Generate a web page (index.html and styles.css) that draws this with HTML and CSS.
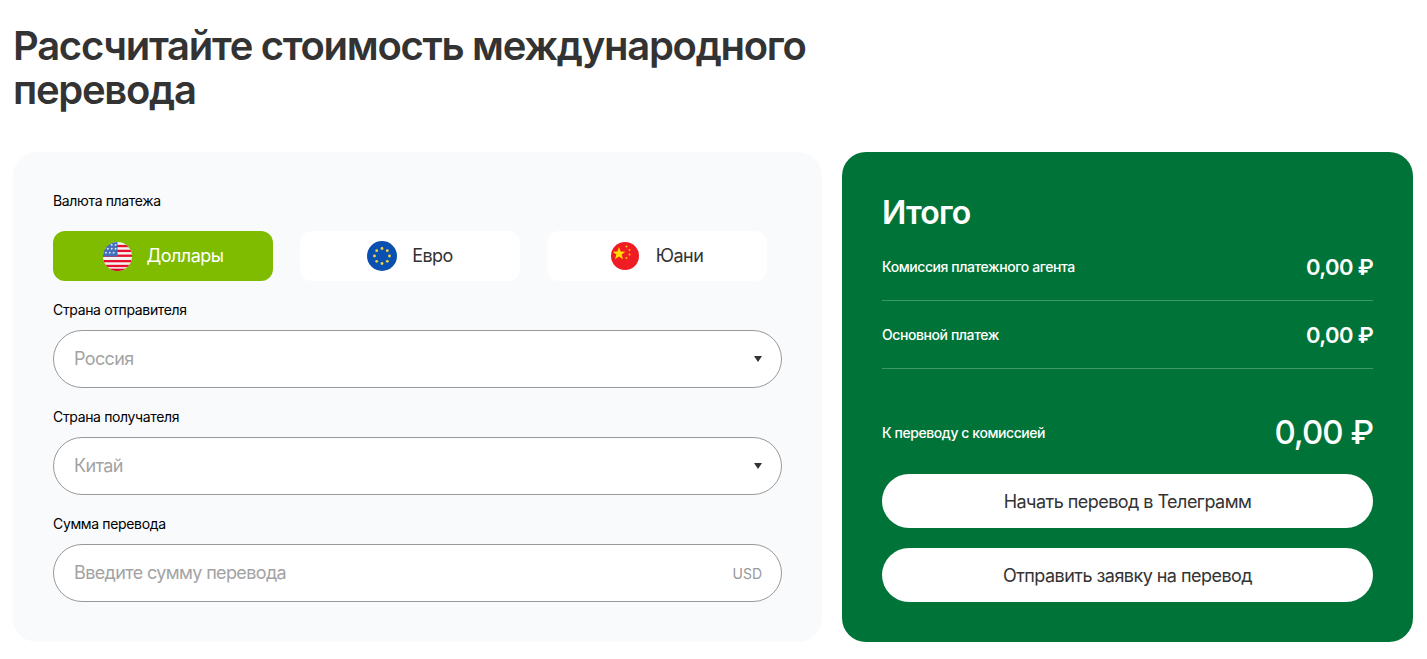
FILE: index.html
```html
<!DOCTYPE html>
<html lang="ru">
<head>
    <meta charset="UTF-8">
    <meta name="viewport" content="width=device-width, initial-scale=1.0">
    <title>Рассчитайте стоимость международного перевода</title>
    <link rel="stylesheet" href="styles.css">
</head>
<body>
    <h1 class="title">Рассчитайте стоимость международного перевода</h1>
    <div class="calc">
        <form class="calc-form">
            <div class="label label-first">Валюта платежа</div>
            <div class="currencies">
                <button type="button" class="currency active">
                    <svg class="flag" width="29" height="29" viewBox="0 0 30 30">
                        <defs><clipPath id="clipUs"><circle cx="15" cy="15" r="15"/></clipPath></defs>
                        <g clip-path="url(#clipUs)">
                            <rect width="30" height="30" fill="#f3f3f3"/>
                            <rect y="3" width="30" height="2.4" fill="#e8112d"/>
                            <rect y="8" width="30" height="2.4" fill="#e8112d"/>
                            <rect y="13" width="30" height="2.4" fill="#e8112d"/>
                            <rect y="18.6" width="30" height="2.4" fill="#e8112d"/>
                            <rect y="23.6" width="30" height="2.4" fill="#e8112d"/>
                            <rect y="27.6" width="30" height="3" fill="#d80027"/>
                            <rect width="15" height="15" fill="#3f6fb8"/>
                            <g fill="#dfe8f5">
                                <circle cx="5" cy="7" r="1"/><circle cx="9" cy="7" r="1"/><circle cx="13" cy="7" r="1"/>
                                <circle cx="3" cy="11" r="1"/><circle cx="7" cy="11" r="1"/><circle cx="11" cy="11" r="1"/>
                                <circle cx="9" cy="3" r="1"/><circle cx="13" cy="3" r="1"/>
                            </g>
                        </g>
                    </svg>
                    <span class="currency-name">Доллары</span>
                </button>
                <button type="button" class="currency">
                    <svg class="flag" width="30" height="30" viewBox="0 0 30 30">
                        <circle cx="15" cy="15" r="15" fill="#0a50b0"/>
                        <g fill="#f5d33a">
                            <circle cx="15" cy="7.5" r="1.4"/><circle cx="15" cy="22.5" r="1.4"/>
                            <circle cx="7.5" cy="15" r="1.4"/><circle cx="22.5" cy="15" r="1.4"/>
                            <circle cx="9.7" cy="9.7" r="1.4"/><circle cx="20.3" cy="9.7" r="1.4"/>
                            <circle cx="9.7" cy="20.3" r="1.4"/><circle cx="20.3" cy="20.3" r="1.4"/>
                        </g>
                    </svg>
                    <span class="currency-name">Евро</span>
                </button>
                <button type="button" class="currency">
                    <svg class="flag flag-cn" width="28" height="28" viewBox="0 0 28 28">
                        <circle cx="14" cy="14" r="14" fill="#f01c24"/>
                        <polygon points="8,5 9.6,9.6 14.4,9.7 10.6,12.6 12,17.2 8,14.5 4,17.2 5.4,12.6 1.6,9.7 6.4,9.6" fill="#ffe000"/>
                        <g fill="#f5c518">
                            <circle cx="15.5" cy="4.5" r="1"/><circle cx="18.5" cy="8" r="1"/>
                            <circle cx="18.5" cy="12.5" r="1"/><circle cx="15.5" cy="16" r="1"/>
                        </g>
                    </svg>
                    <span class="currency-name">Юани</span>
                </button>
            </div>

            <label class="label">Страна отправителя</label>
            <div class="field">
                <span class="placeholder">Россия</span>
                <span class="arrow"></span>
            </div>

            <label class="label">Страна получателя</label>
            <div class="field">
                <span class="placeholder">Китай</span>
                <span class="arrow"></span>
            </div>

            <label class="label">Сумма перевода</label>
            <div class="field">
                <span class="placeholder">Введите сумму перевода</span>
                <span class="unit">USD</span>
            </div>
        </form>

        <div class="summary">
            <h2 class="summary-title">Итого</h2>
            <div class="row row-line">
                <span class="row-name">Комиссия платежного агента</span>
                <span class="row-sum">0,00 ₽</span>
            </div>
            <div class="row row-line">
                <span class="row-name">Основной платеж</span>
                <span class="row-sum">0,00 ₽</span>
            </div>
            <div class="row row-total">
                <span class="row-name">К переводу с комиссией</span>
                <span class="total-sum">0,00 ₽</span>
            </div>
            <button type="button" class="action">Начать перевод в Телеграмм</button>
            <button type="button" class="action">Отправить заявку на перевод</button>
        </div>
    </div>
</body>
</html>
```

FILE: styles.css
```css
* {
    box-sizing: border-box;
}
body {
    font-family: 'Inter', sans-serif;
    background-color: #fff;
    color: #333;
    margin: 0;
    padding: 0 14px 0 13px;
    overflow: hidden;
}
.title {
    width: 830px;
    margin: 0;
    padding-top: 24px;
    font-size: 40px;
    line-height: 44px;
    font-weight: 600;
    letter-spacing: -0.032em;
    color: #333;
}
.calc {
    display: flex;
    gap: 20px;
    margin-top: 40px;
}
.calc-form {
    width: 809px;
    height: 490px;
    padding: 40px;
    background-color: #f9fafc;
    border-radius: 24px;
}
.label {
    display: block;
    height: 17px;
    margin: 20px 0 12px;
    font-size: 14px;
    line-height: 17px;
    letter-spacing: -0.025em;
    color: #000;
}
.label-first {
    margin: 0 0 22px;
}
.currencies {
    display: flex;
    gap: 27px;
    width: 714px;
}
.currency {
    flex: 1;
    height: 50px;
    display: flex;
    align-items: center;
    justify-content: center;
    gap: 15px;
    border: none;
    border-radius: 12px;
    background-color: #fff;
    color: #333;
    font-family: inherit;
    font-size: 18px;
    letter-spacing: -0.03em;
    cursor: pointer;
}
.currency.active {
    background-color: #7fbc00;
    color: #fff;
}
.currency-name {
    padding-bottom: 2px;
}
.flag {
    flex: none;
}
.flag-cn {
    margin-right: 2px;
}
.field {
    height: 58px;
    display: flex;
    align-items: center;
    justify-content: space-between;
    padding: 0 19px 0 20px;
    background-color: #fff;
    border: 1px solid #999;
    border-radius: 29px;
}
.placeholder {
    padding-bottom: 2px;
    font-size: 18px;
    letter-spacing: -0.035em;
    color: #a3a3a3;
}
.arrow {
    width: 0;
    height: 0;
    border-left: 4px solid transparent;
    border-right: 4px solid transparent;
    border-top: 6px solid #333;
}
.unit {
    font-size: 14px;
    color: #999;
}
.summary {
    width: 571px;
    height: 490px;
    padding: 40px;
    background-color: #007438;
    border-radius: 24px;
    color: #fff;
}
.summary-title {
    margin: 0;
    font-size: 32px;
    line-height: 42px;
    font-weight: 600;
    letter-spacing: -0.025em;
}
.row {
    display: flex;
    align-items: center;
    justify-content: space-between;
}
.row-line {
    height: 68px;
    border-bottom: 1px solid rgba(255, 255, 255, 0.25);
}
.row-line:first-of-type {
    margin-top: -1px;
}
.row-name {
    font-size: 14px;
    font-weight: 500;
    letter-spacing: -0.03em;
}
.row-sum {
    font-size: 22px;
    font-weight: 600;
    letter-spacing: -0.03em;
}
.row-total {
    height: 50px;
    margin-top: 38px;
    margin-bottom: 17px;
}
.total-sum {
    font-size: 33px;
    font-weight: 500;
    letter-spacing: -0.03em;
}
.action {
    display: block;
    width: 100%;
    height: 54px;
    margin-bottom: 20px;
    border: none;
    border-radius: 27px;
    background-color: #fff;
    color: #333;
    font-family: inherit;
    font-size: 18px;
    letter-spacing: -0.03em;
    cursor: pointer;
}
```
